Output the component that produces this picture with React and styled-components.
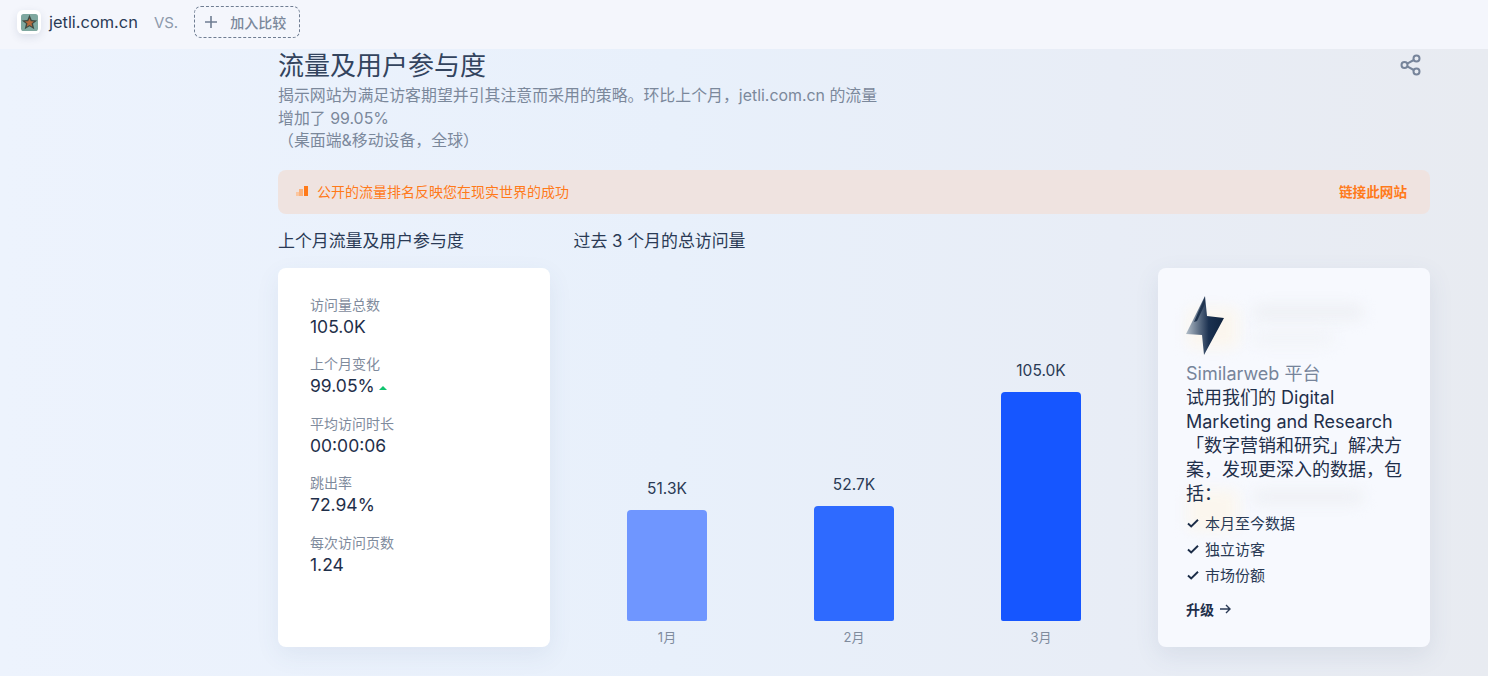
import React from "react";
import styled, { createGlobalStyle } from "styled-components";

const GlobalStyle = createGlobalStyle`
  html, body { margin: 0; height: 100%; overflow: hidden; }
  body {
    font-family: "Inter", "Noto Sans CJK SC", sans-serif;
    color: #1b2c47;
  }
`;

const Page = styled.div`
  width: 1488px;
  height: 676px;
  overflow: hidden;
  background: linear-gradient(90deg, #edf3fd 0%, #e8f0fb 45%, #e8edf6 75%, #e8ebf1 100%);
`;

const TopBar = styled.header`
  height: 49px;
  box-sizing: border-box;
  padding: 0 0 5px 17px;
  display: flex;
  align-items: center;
  background: #f4f6fc;
`;

const Favicon = styled.span`
  width: 24px;
  height: 24px;
  border-radius: 6px;
  background: #fff;
  box-shadow: 0 3px 8px rgba(40, 60, 100, 0.12);
  display: flex;
  align-items: center;
  justify-content: center;
`;

const Domain = styled.span`
  margin-left: 8px;
  font-size: 16.4px;
  color: #2a3a55;
`;

const Versus = styled.span`
  margin-left: 16px;
  font-size: 15px;
  color: #8d99ab;
`;

const CompareButton = styled.button`
  margin-left: 16px;
  width: 106px;
  height: 32px;
  padding: 0 0 0 9px;
  border: 1px dashed #6f7d92;
  border-radius: 7px;
  background: transparent;
  display: flex;
  align-items: center;
  gap: 12px;
  font: 500 14px "Noto Sans CJK SC", sans-serif;
  color: #7b889b;
`;

const Main = styled.main`
  padding: 0 58px 0 278px;
`;

const TitleRow = styled.div`
  display: flex;
  justify-content: space-between;
  align-items: flex-start;
`;

const Title = styled.h1`
  margin: 0;
  font: 400 26px/29px "Noto Sans CJK SC", sans-serif;
  color: #33445e;
`;

const ShareIcon = styled.svg`
  margin: 5px 8px 0 0;
  display: block;
`;

const Description = styled.p`
  margin: 0;
  width: 610px;
  font-size: 15.9px;
  line-height: 22.5px;
  color: #7b889b;
  padding-top: 7px;
`;

const Banner = styled.div`
  margin-top: 17px;
  height: 44px;
  box-sizing: border-box;
  padding: 0 23px 2px 18px;
  border-radius: 8px;
  background: #efe3e0;
  display: flex;
  align-items: center;
  justify-content: space-between;
  color: #ff7a1a;
`;

const BannerText = styled.span`
  display: flex;
  align-items: center;
  gap: 9px;
  font-size: 14px;
`;

const BannerLink = styled.span`
  margin-top: 1px;
  font-size: 13.6px;
  font-weight: 700;
`;

const Columns = styled.div`
  margin-top: 15px;
  display: grid;
  grid-template-columns: 272px 561px 272px;
  column-gap: 23.5px;
`;

const Heading = styled.h2`
  margin: 0 0 15px;
  font-size: 16.9px;
  line-height: 24px;
  font-weight: 400;
  color: #2a3a55;
  grid-column: ${(p) => p.$col};
`;

const StatsCard = styled.section`
  grid-column: 1;
  height: 379px;
  box-sizing: border-box;
  padding: 26px 32px;
  background: #fff;
  border-radius: 8px;
  box-shadow: 0 8px 24px rgba(70, 90, 130, 0.08);
`;

const Stat = styled.div`
  margin-bottom: 14.5px;
`;

const StatLabel = styled.div`
  font-size: 14px;
  line-height: 21px;
  color: #7f8b9d;
`;

const StatValue = styled.div`
  font-size: 17.5px;
  line-height: 24px;
  color: #1f2f4a;
  display: flex;
  align-items: center;
  gap: 4px;
`;

const UpArrow = styled.span`
  width: 0;
  height: 0;
  margin-top: 3px;
  border-left: 4px solid transparent;
  border-right: 4px solid transparent;
  border-bottom: 4px solid #10c46f;
`;

const Chart = styled.div`
  grid-column: 2;
  height: 379px;
  display: grid;
  grid-template-columns: repeat(3, 187px);
  align-items: end;
`;

const BarColumn = styled.div`
  display: flex;
  flex-direction: column;
  align-items: center;
`;

const BarValue = styled.div`
  font-size: 15.5px;
  line-height: 20px;
  color: #2a3a55;
  margin-bottom: 11px;
`;

const Bar = styled.div`
  width: 80px;
  height: ${(p) => p.$height}px;
  border-radius: 4px 4px 2px 2px;
  background: ${(p) => p.$color};
`;

const BarMonth = styled.div`
  margin: 7px 0 1px;
  font-size: 13px;
  line-height: 18px;
  color: #7f8b9d;
`;

const PromoCard = styled.aside`
  grid-column: 3;
  position: relative;
  height: 379px;
  box-sizing: border-box;
  padding: 28px 28px 0;
  background: #f7f9fe;
  border-radius: 8px;
  box-shadow: 0 8px 24px rgba(70, 90, 130, 0.1);
  overflow: hidden;
`;

const Blur = styled.span`
  position: absolute;
  left: ${(p) => p.$left}px;
  top: ${(p) => p.$top}px;
  width: ${(p) => p.$width}px;
  height: ${(p) => p.$height}px;
  background: ${(p) => p.$color};
  filter: blur(7px);
  border-radius: 6px;
`;

const PromoBody = styled.div`
  position: relative;
`;

const BoltIcon = styled.svg`
  display: block;
`;

const PromoEyebrow = styled.div`
  margin-top: 6px;
  font-size: 18px;
  line-height: 24px;
  color: #76849a;
`;

const PromoText = styled.div`
  font-size: 18px;
  line-height: 24px;
  color: #1f2f4a;
`;

const Checks = styled.ul`
  list-style: none;
  margin: 4px 0 0;
  padding: 0;
`;

const CheckItem = styled.li`
  display: flex;
  align-items: center;
  gap: 5px;
  height: 26px;
  font-size: 15px;
  color: #2a3a55;
`;

const Upgrade = styled.div`
  margin-top: 11px;
  display: flex;
  align-items: center;
  gap: 4px;
  font-size: 14px;
  font-weight: 700;
  color: #1f2f4a;
`;

const stats = [
  ["访问量总数", "105.0K"],
  ["上个月变化", "99.05%", true],
  ["平均访问时长", "00:00:06"],
  ["跳出率", "72.94%"],
  ["每次访问页数", "1.24"],
];

const bars = [
  { month: "1月", value: "51.3K", height: 111, color: "#6f96ff" },
  { month: "2月", value: "52.7K", height: 115, color: "#2e6aff" },
  { month: "3月", value: "105.0K", height: 229, color: "#1656ff" },
];

const Check = () => (
  <svg width="14" height="14" viewBox="0 0 14 14" fill="none" stroke="#1b2c47" strokeWidth="1.9">
    <path d="M2 7.5l3.2 3L12 3.8" />
  </svg>
);

function App() {
  return (
    <Page>
      <GlobalStyle />
      <TopBar>
        <Favicon>
          <svg width="17" height="17" viewBox="0 0 20 20">
            <rect width="20" height="20" rx="3" fill="#7fa8a0" />
            <path d="M10 1l2.6 6 6.4.5-4.9 4.1 1.6 6.4L10 14.500l-5.700 3.500 1.600-6.400L1 7.500 7.400 7z" fill="#3f4a42" />
            <path d="M10 5l1.500 3.600 3.800.3-2.900 2.400.9 3.700L10 13l-3.300 2 .9-3.700-2.900-2.400 3.800-.3z" fill="#b5693c" />
          </svg>
        </Favicon>
        <Domain>jetli.com.cn</Domain>
        <Versus>VS.</Versus>
        <CompareButton>
          <svg width="14" height="14" viewBox="0 0 14 14" stroke="#6f7d92" strokeWidth="1.6">
            <path d="M7 1v12M1 7h12" />
          </svg>
          加入比较
        </CompareButton>
      </TopBar>
      <Main>
        <TitleRow>
          <Title>流量及用户参与度</Title>
          <ShareIcon width="22" height="22" viewBox="0 0 22 22" fill="none" stroke="#76849a" strokeWidth="2">
            <circle cx="4.5" cy="11" r="3" />
            <circle cx="16.500" cy="4.500" r="3" />
            <circle cx="16.500" cy="17.500" r="3" />
            <path d="M7.200 9.600l6.600-3.600M7.200 12.400l6.600 3.600" />
          </ShareIcon>
        </TitleRow>
        <Description>
          揭示网站为满足访客期望并引其注意而采用的策略。环比上个月，jetli.com.cn 的流量增加了 99.05%
          <br />
          （桌面端&amp;移动设备，全球）
        </Description>
        <Banner>
          <BannerText>
            <svg width="12" height="10" viewBox="0 0 12 10">
              <rect x="0" y="6" width="3" height="4" fill="#fbc6a0" />
              <rect x="3" y="3" width="4" height="7" fill="#fbb27c" />
              <rect x="8" y="0" width="4" height="10" fill="#ff7a1a" />
            </svg>
            公开的流量排名反映您在现实世界的成功
          </BannerText>
          <BannerLink>链接此网站</BannerLink>
        </Banner>
        <Columns>
          <Heading $col="1">上个月流量及用户参与度</Heading>
          <Heading $col="2 / 4">过去 3 个月的总访问量</Heading>
          <StatsCard>
            {stats.map(([label, value, up]) => (
              <Stat key={label}>
                <StatLabel>{label}</StatLabel>
                <StatValue>
                  {value}
                  {up && <UpArrow />}
                </StatValue>
              </Stat>
            ))}
          </StatsCard>
          <Chart>
            {bars.map((b) => (
              <BarColumn key={b.month}>
                <BarValue>{b.value}</BarValue>
                <Bar $height={b.height} $color={b.color} />
                <BarMonth>{b.month}</BarMonth>
              </BarColumn>
            ))}
          </Chart>
          <PromoCard>
            <Blur $left={95} $top={36} $width={110} $height={16} $color="#eef0f4" />
            <Blur $left={95} $top={62} $width={80} $height={16} $color="#f2f4f8" />
            <Blur $left={30} $top={40} $width={50} $height={40} $color="#fbf6ee" />
            <Blur $left={95} $top={222} $width={110} $height={14} $color="#eef0f4" />
            <Blur $left={30} $top={222} $width={50} $height={40} $color="#fbf6ee" />
            <PromoBody>
              <BoltIcon width="40" height="60" viewBox="0 0 40 60">
                <defs>
                  <linearGradient id="bolt" x1="0" x2="1" y1="0" y2="0">
                    <stop offset="0" stopColor="#b4bfca" />
                    <stop offset="0.6" stopColor="#1b3150" />
                    <stop offset="1" stopColor="#10243f" />
                  </linearGradient>
                </defs>
                <path d="M19 0l2 20 17 2-20 37-2-20-16-1z" fill="url(#bolt)" />
                <path d="M19 1L8 26l3-1L19 8z" fill="#20344f" />
              </BoltIcon>
              <PromoEyebrow>Similarweb 平台</PromoEyebrow>
              <PromoText>试用我们的 Digital Marketing and Research「数字营销和研究」解决方案，发现更深入的数据，包括：</PromoText>
              <Checks>
                <CheckItem><Check />本月至今数据</CheckItem>
                <CheckItem><Check />独立访客</CheckItem>
                <CheckItem><Check />市场份额</CheckItem>
              </Checks>
              <Upgrade>
                升级
                <svg width="14" height="14" viewBox="0 0 14 14" fill="none" stroke="#2a3a55" strokeWidth="1.4">
                  <path d="M2 7h10M8 3l4 4-4 4" />
                </svg>
              </Upgrade>
            </PromoBody>
          </PromoCard>
        </Columns>
      </Main>
    </Page>
  );
}

export default App;
